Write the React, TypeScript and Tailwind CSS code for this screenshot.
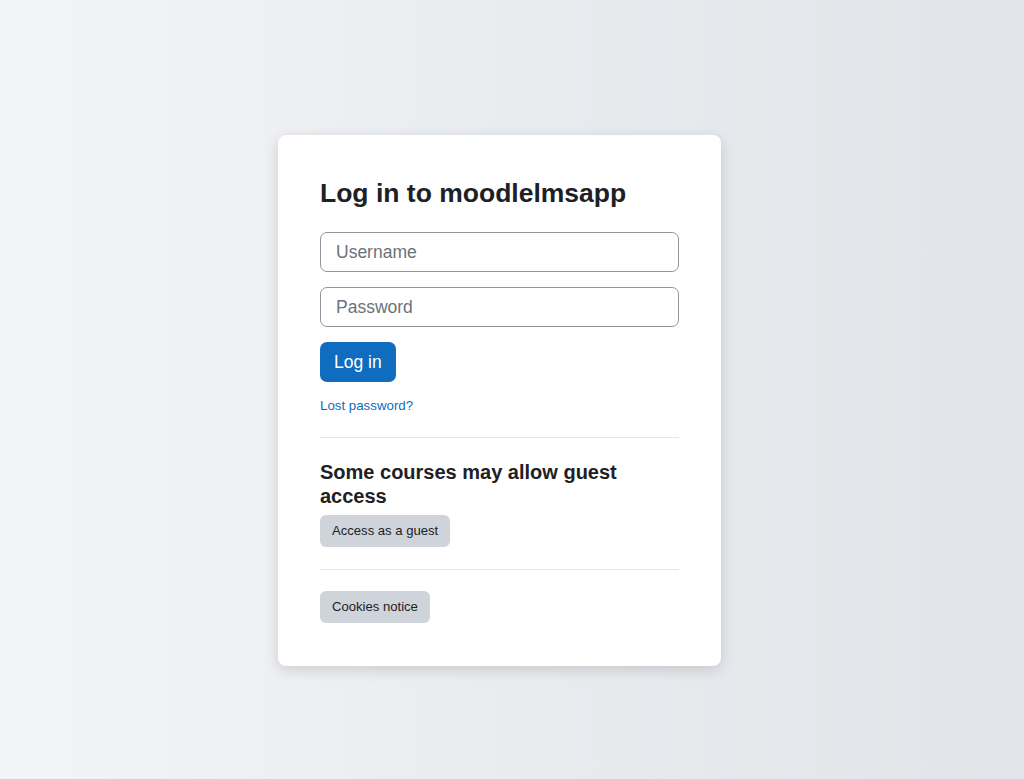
export default function App() {
  return (
    <div className="min-h-[779px] w-full bg-gradient-to-r from-[#f3f4f6] via-[#e9ecef] to-[#e1e4e8] pt-[135px] pl-[278px] font-['Liberation_Sans',Arial,sans-serif] text-[#1d2125]">
      <div className="w-[443px] rounded-[8px] bg-white px-[42px] pt-[43px] pb-[43px] shadow-[0_4px_14px_rgba(0,0,0,0.14)]">
        {/* Login form */}
        <h2 className="text-[26.5px] font-bold leading-[31px]">Log in to moodlelmsapp</h2>
        <form className="mt-[23px] flex flex-col" onSubmit={(e) => e.preventDefault()}>
          <input
            type="text"
            placeholder="Username"
            className="h-[40px] w-full rounded-[7px] border border-[#8f959e] px-[15px] text-[17.5px] placeholder:text-[#6a737b] focus:outline-none"
          />
          <input
            type="password"
            placeholder="Password"
            className="mt-[15px] h-[40px] w-full rounded-[7px] border border-[#8f959e] px-[15px] text-[17.5px] placeholder:text-[#6a737b] focus:outline-none"
          />
          <div className="mt-[15px]">
            <button className="h-[40px] rounded-[7px] bg-[#0f6cbf] px-[14px] text-[17.5px] text-white">Log in</button>
          </div>
        </form>
        <div className="mt-[14px] text-[13.3px] leading-[20px]">
          <a href="#" className="text-[#0f6cbf]">Lost password?</a>
        </div>

        <hr className="mt-[21px] border-t border-[#e4e7ea]" />

        {/* Guest access */}
        <h2 className="mt-[22px] text-[20px] font-bold leading-[24px]">Some courses may allow guest access</h2>
        <button className="mt-[7px] h-[32px] rounded-[6px] bg-[#ced4da] px-[12px] text-[13.1px] text-[#1d2125]">
          Access as a guest
        </button>

        <hr className="mt-[22px] border-t border-[#e4e7ea]" />

        <button className="mt-[21px] h-[32px] rounded-[6px] bg-[#ced4da] px-[12px] text-[13.1px] text-[#1d2125]">
          Cookies notice
        </button>
      </div>
    </div>
  )
}
